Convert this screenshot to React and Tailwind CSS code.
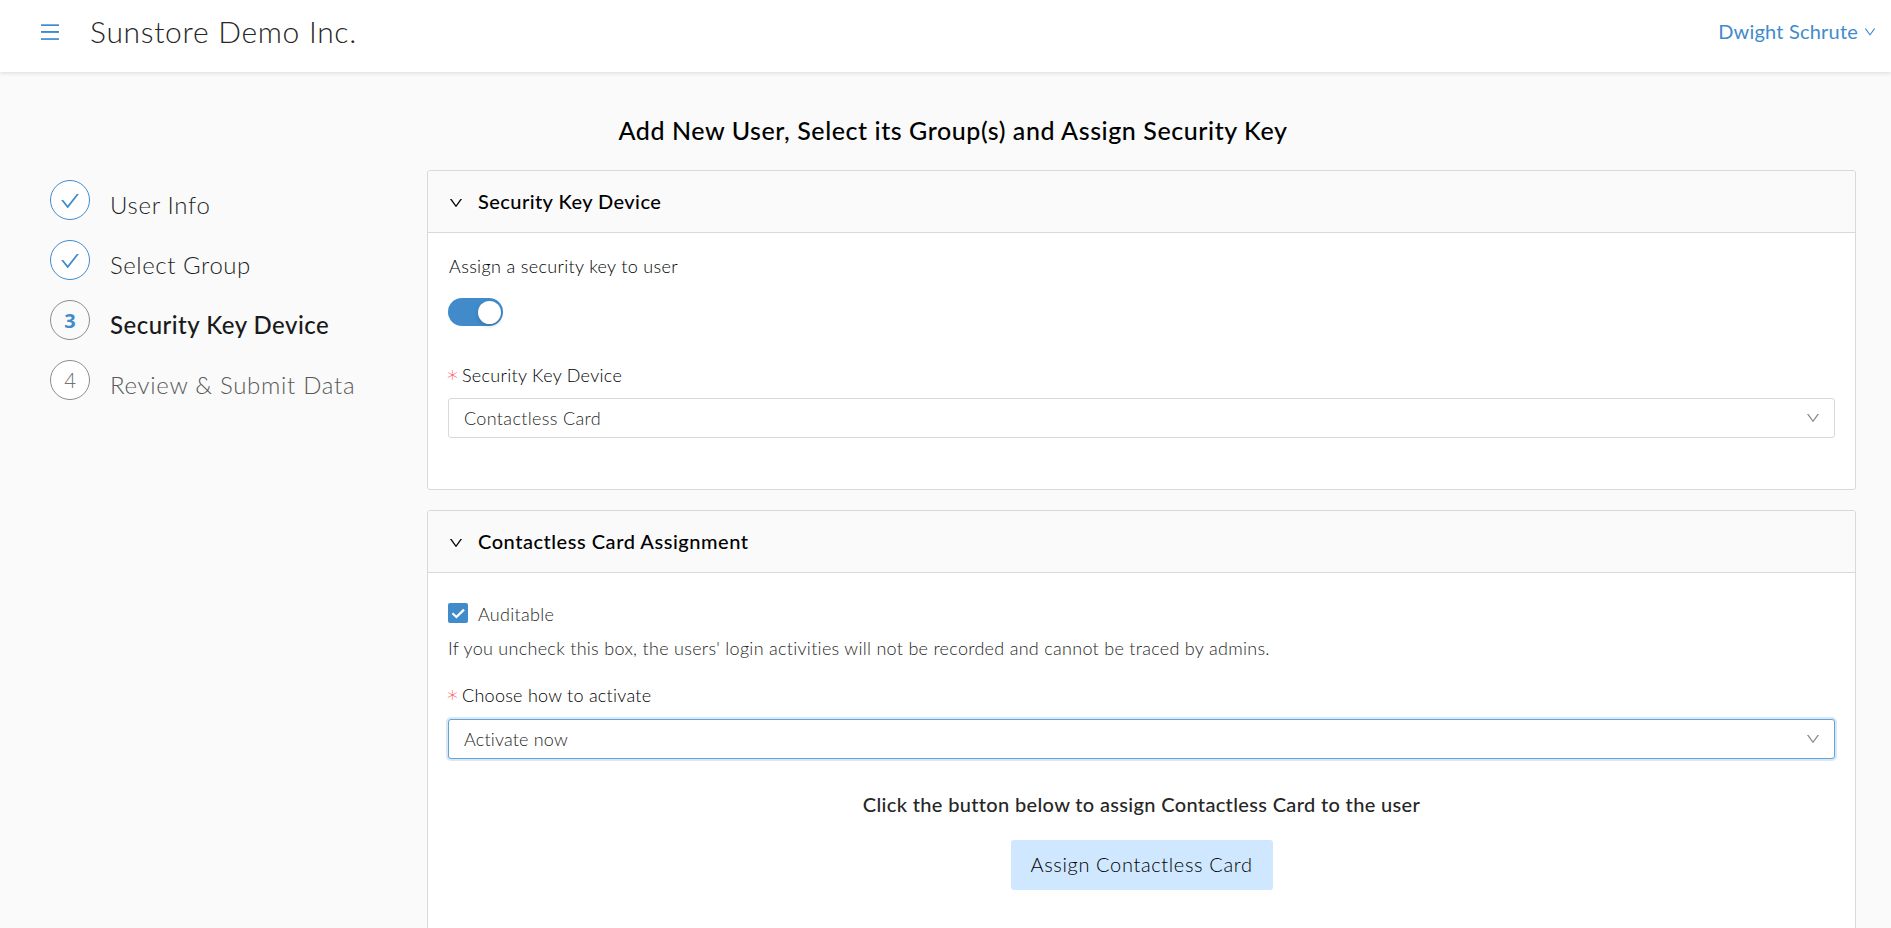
import { AiOutlineCheck, AiOutlineDown } from "react-icons/ai";

const steps = [
  { label: "User Info", state: "done", spacing: "tracking-[0.7px]" },
  { label: "Select Group", state: "done", spacing: "tracking-[0.56px]" },
  { label: "Security Key Device", state: "active", spacing: "tracking-[0.48px]" },
  { label: "Review & Submit Data", state: "todo", spacing: "tracking-[0.7px]" },
];

function Header() {
  return (
    <header className="relative z-10 h-[72px] shrink-0 bg-white shadow-[0_1px_4px_rgba(0,21,41,0.14)]">
      <div className="flex h-[63px] items-center pr-[14px] pl-[41px]">
        <button className="h-4 w-[18px] text-[#428bca]" aria-label="Menu">
          <svg viewBox="0 0 18 16" className="block h-4 w-[18px]" fill="currentColor">
            <rect x="0" y="0.3" width="18" height="1.7" />
            <rect x="0" y="7" width="18" height="1.9" />
            <rect x="0" y="14.2" width="18" height="1.7" />
          </svg>
        </button>
        <h1 className="ml-[31px] pb-0.5 text-[30px] leading-[60px] font-light tracking-[0.69px] text-[#262626]">
          Sunstore Demo Inc.
        </h1>
        <button className="ml-auto flex items-center text-[20px] leading-[60px] tracking-[0.2px] text-[#428bca]">
          <span className="pb-0.5">Dwight Schrute</span>
          <AiOutlineDown className="mt-px ml-[5px] size-[14px]" />
        </button>
      </div>
    </header>
  );
}

function StepMarker({ state, number }) {
  if (state === "done") {
    return (
      <span className="flex size-10 items-center justify-center rounded-full border border-[#428bca] bg-white text-[#428bca]">
        <AiOutlineCheck className="mt-px size-[22px]" />
      </span>
    );
  }
  if (state === "active") {
    return (
      <span className="flex size-10 items-center justify-center rounded-full border border-[#8c8c8c] pt-0.5 font-['Open_Sans',sans-serif] text-[20px] font-bold text-[#428bca]">
        {number}
      </span>
    );
  }
  return (
    <span className="flex size-10 items-center justify-center rounded-full border border-[#8c8c8c] bg-white pt-0.5 font-['Open_Sans',sans-serif] text-[20px] font-light text-[#737373]">
      {number}
    </span>
  );
}

function Steps() {
  const tone = {
    done: "font-light text-[#1f1f1f]",
    active: "font-medium text-[#1a1a1a]",
    todo: "font-light text-[#595959]",
  };
  return (
    <ol className="flex w-[377px] shrink-0 flex-col gap-5 pt-[10px]">
      {steps.map((s, i) => (
        <li key={s.label} className="flex h-10 items-start gap-5">
          <StepMarker state={s.state} number={i + 1} />
          <span className={`pt-[5px] text-[24px] leading-10 ${tone[s.state]} ${s.spacing}`}>{s.label}</span>
        </li>
      ))}
    </ol>
  );
}

function Panel({ title, spacing, className, children }) {
  return (
    <section className={`rounded-[3px] border border-[#d9d9d9] bg-white px-5 ${className}`}>
      <div className="-mx-5 flex h-[62px] items-center rounded-t-[2px] border-b border-[#d9d9d9] bg-[#fafafa] pl-5 text-black">
        <AiOutlineDown className="mt-[3px] size-4" />
        <h3 className={`ml-[14px] pb-0.5 text-[20px] leading-[30px] font-medium ${spacing}`}>{title}</h3>
      </div>
      {children}
    </section>
  );
}

function RequiredLabel({ spacing, className, children }) {
  return (
    <label className={`flex h-[26px] items-center text-[18px] leading-[26px] font-light text-black ${spacing} ${className}`}>
      <span className="mr-[3px] -ml-px w-3 pt-[9px] font-['DejaVu_Sans',sans-serif] text-[22px] tracking-normal text-[#ff4d4f]">*</span>
      <span className="pt-px">{children}</span>
    </label>
  );
}

function Select({ value, spacing, className }) {
  return (
    <div className={`flex h-10 items-center justify-between rounded-[3px] border bg-white pr-[13px] pl-[15px] ${className}`}>
      <span className={`pt-px text-[18px] font-light text-[#262626] ${spacing}`}>{value}</span>
      <AiOutlineDown className="size-4 text-[#8c8c8c]" />
    </div>
  );
}

export default function App() {
  return (
    <div className="flex h-[928px] flex-col overflow-hidden bg-[#fafafa] font-['Lato',sans-serif]">
      <Header />
      <main className="pt-[38px] pr-[35px] pl-[50px]">
        <h2 className="h-10 text-center text-[25px] leading-10 font-medium tracking-[0.57px] text-black">
          Add New User, Select its Group(s) and Assign Security Key
        </h2>
        <div className="mt-5 flex">
          <Steps />
          <div className="flex grow flex-col gap-5">
            <Panel title="Security Key Device" spacing="tracking-[0.43px]" className="h-[320px]">
              <p className="mt-5 pl-px text-[18px] leading-[27px] font-light tracking-[0.34px] text-black">
                Assign a security key to user
              </p>
              <button
                role="switch"
                aria-checked="true"
                aria-label="Assign a security key to user"
                className="mt-[18px] flex h-7 w-[55px] items-center justify-end rounded-full bg-[#428bca] pr-0.5"
              >
                <span className="size-[23px] rounded-full bg-white shadow-[0_2px_4px_rgba(0,35,11,0.2)]" />
              </button>
              <RequiredLabel className="mt-[35px]" spacing="tracking-[0.31px]">Security Key Device</RequiredLabel>
              <Select className="mt-[11px] border-[#d9d9d9]" value="Contactless Card" spacing="tracking-[0.34px]" />
            </Panel>
            <Panel title="Contactless Card Assignment" spacing="tracking-[0.53px]" className="h-[460px]">
              <div className="mt-[27px] flex h-[26px] items-center">
                <span className="flex size-5 items-center justify-center rounded-[2px] bg-[#428bca]">
                  <svg viewBox="0 0 20 20" className="size-5" fill="none" stroke="white" strokeWidth="2.2">
                    <path d="M4.4 10.2 8.4 14 16 6.6" />
                  </svg>
                </span>
                <span className="ml-[10px] pt-0.5 text-[18px] leading-[26px] font-light tracking-[0.3px] text-[#262626]">Auditable</span>
              </div>
              <p className="mt-[9px] text-[18px] leading-[26px] font-light tracking-[0.29px] text-[#262626]">
                If you uncheck this box, the users' login activities will not be recorded and cannot be traced by admins.
              </p>
              <RequiredLabel className="mt-5" spacing="tracking-[0.26px]">Choose how to activate</RequiredLabel>
              <Select
                className="mt-3 border-[#63a4d7] shadow-[0_0_0_2px_rgba(66,139,202,0.2)]"
                value="Activate now"
                spacing="tracking-[0.18px]"
              />
              <div className="mt-[30px] flex flex-col items-center">
                <p className="text-[20px] leading-[30px] font-medium tracking-[0.34px] text-[#262626]">
                  Click the button below to assign Contactless Card to the user
                </p>
                <button className="mt-[21px] h-[50px] w-[262px] rounded-[3px] bg-[#cfe8ff] pb-0.5 text-[20px] font-light tracking-[0.64px] text-black">
                  Assign Contactless Card
                </button>
              </div>
            </Panel>
          </div>
        </div>
      </main>
    </div>
  );
}
